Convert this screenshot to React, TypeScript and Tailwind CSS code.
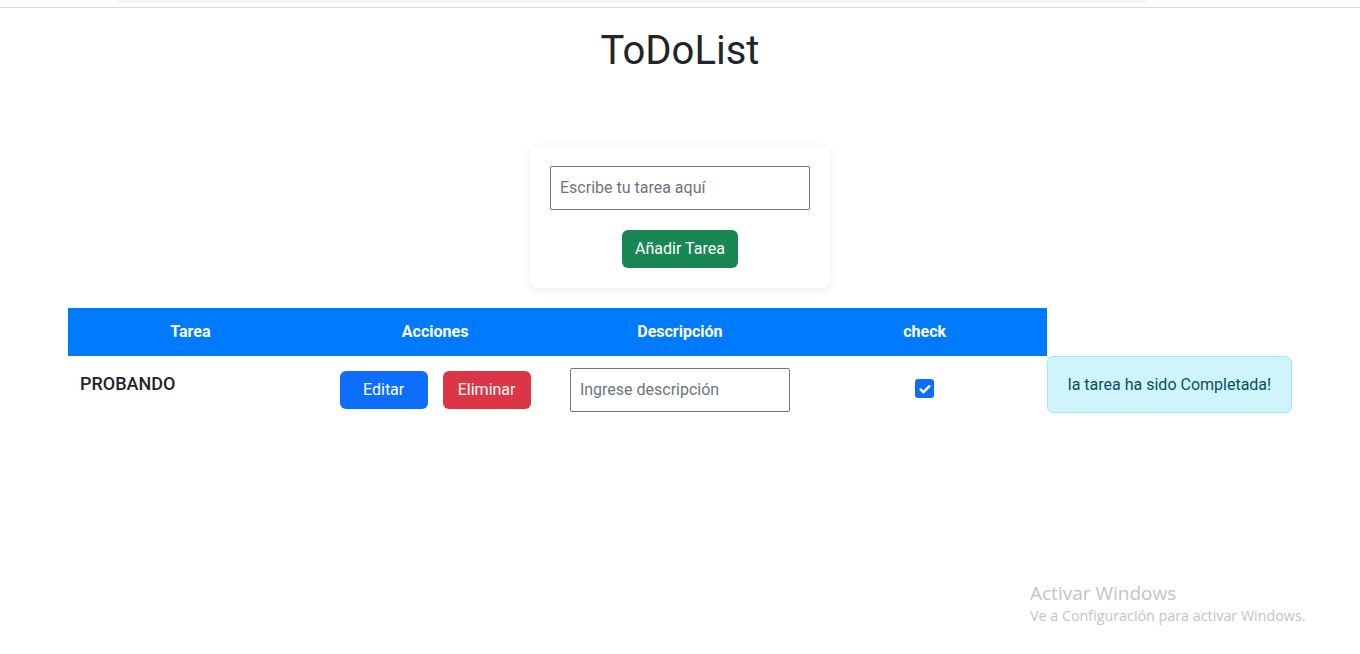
import { useState } from 'react';

function CheckBox({ checked }: { checked: boolean }) {
  return (
    <div
      className={
        'w-[19px] h-[19px] rounded-[3px] flex items-center justify-center ' +
        (checked ? 'bg-[#0d6efd]' : 'bg-white border border-[#767676]')
      }
    >
      {checked && (
        <svg width="14" height="14" viewBox="0 0 16 16" fill="none">
          <path d="M3 8.5l3.2 3.2L13 4.8" stroke="white" strokeWidth="2.8" strokeLinecap="round" strokeLinejoin="round" />
        </svg>
      )}
    </div>
  );
}

export default function App() {
  const [task, setTask] = useState('');
  const [desc, setDesc] = useState('');

  return (
    <main className="relative min-h-[654px] bg-white font-['Roboto',sans-serif] text-[#212529]">
      {/* browser chrome remnants */}
      <div className="h-[8px] border-b border-[#dadce0] pl-[117px]">
        <div className="h-[3px] w-[1030px] rounded-b-[6px] bg-[#f1f3f4]" />
      </div>

      <h1 className="mt-[19px] text-center text-[40px] leading-[48px] font-normal">ToDoList</h1>

      <div className="mt-[71px] flex justify-center">
        <div className="w-[300px] rounded-[8px] bg-white p-5 shadow-[0_2px_10px_rgba(0,0,0,0.08)] flex flex-col items-center gap-5">
          <input
            value={task}
            onChange={(e) => setTask(e.target.value)}
            placeholder="Escribe tu tarea aquí"
            className="w-[260px] h-[44px] border border-[#767676] rounded-[2px] px-[9px] pb-[2px] text-[16px] placeholder:text-[#6c757d] outline-none"
          />
          <button className="h-[38px] w-[116px] rounded-[6px] bg-[#198754] text-white text-[16px]">Añadir Tarea</button>
        </div>
      </div>

      <div className="mt-5 pl-[68px]">
        <div className="grid grid-cols-4 w-[979px] h-[48px] bg-[#007bff] text-white font-bold text-[16px] items-center text-center">
          <div>Tarea</div>
          <div>Acciones</div>
          <div>Descripción</div>
          <div>check</div>
        </div>
        <div className="flex">
          <div className="grid grid-cols-4 w-[979px]">
            <div className="pt-[14px] px-3 font-medium text-[18px] leading-[27px]">PROBANDO</div>
            <div className="pt-[15px] flex justify-center gap-[15px]">
              <button className="h-[38px] w-[88px] rounded-[6px] bg-[#0d6efd] text-white text-[16px]">Editar</button>
              <button className="h-[38px] w-[88px] rounded-[6px] bg-[#dc3545] text-white text-[16px]">Eliminar</button>
            </div>
            <div className="pt-3 flex justify-center">
              <input
                value={desc}
                onChange={(e) => setDesc(e.target.value)}
                placeholder="Ingrese descripción"
                className="w-[220px] h-[44px] border border-[#767676] rounded-[2px] px-[9px] pb-[2px] text-[16px] placeholder:text-[#6c757d] outline-none"
              />
            </div>
            <div className="pt-[23px] flex justify-center">
              <CheckBox checked />
            </div>
          </div>
          <div className="w-[245px] h-[57px] rounded-[6px] border border-[#9eeaf9] bg-[#cff4fc] text-[#055160] text-[16px] flex items-center justify-center">
            la tarea ha sido Completada!
          </div>
        </div>
      </div>

      {/* windows activation watermark */}
      <div className="absolute left-[1030px] top-[580px] font-['Open_Sans',sans-serif] text-[#c4c4c4] pointer-events-none">
        <p className="text-[19px] leading-[26px]">Activar Windows</p>
        <p className="text-[14.3px] leading-[20px]">Ve a Configuración para activar Windows.</p>
      </div>
    </main>
  );
}
